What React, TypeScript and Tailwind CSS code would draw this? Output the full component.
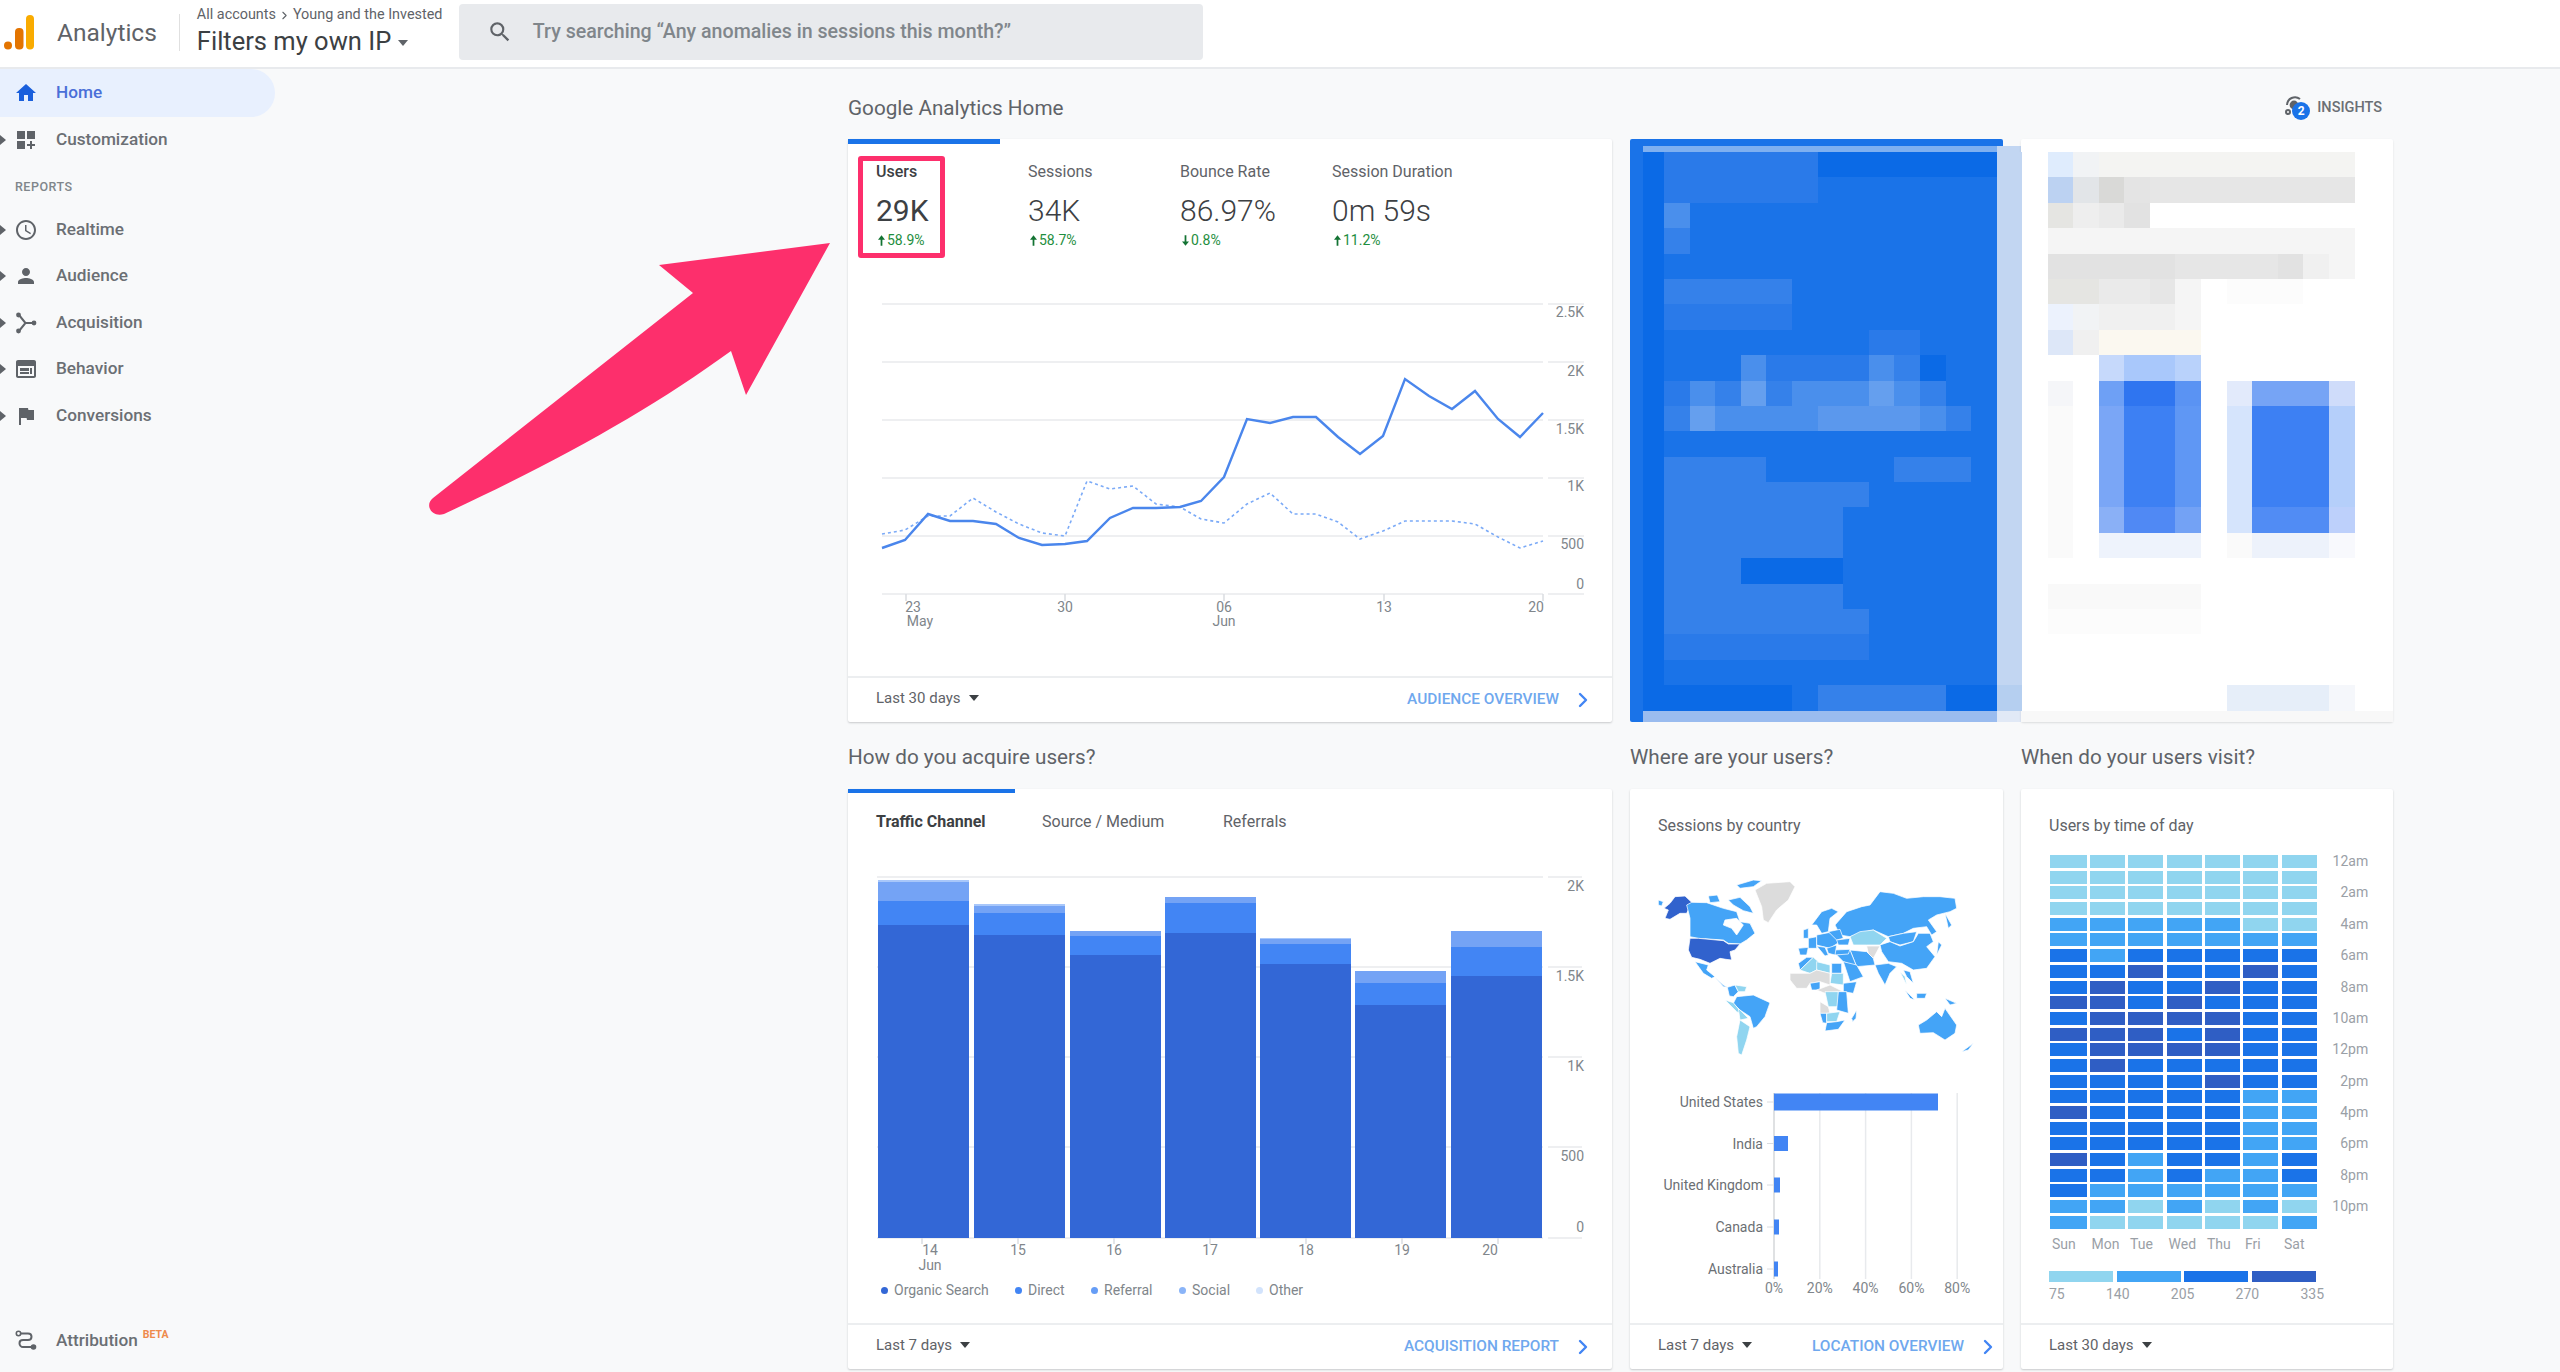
import { ChevronRight } from "lucide-react";

const iconPaths: Record<string, string> = {
  home: "M10 20v-6h4v6h5v-8h3L12 3 2 12h3v8z",
  customization: "M3 3h8v8H3zm10 0h8v8h-8zM3 13h8v8H3zm15 0h-2v3h-3v2h3v3h2v-3h3v-2h-3z",
  realtime:
    "M11.99 2C6.47 2 2 6.48 2 12s4.47 10 9.99 10C17.52 22 22 17.52 22 12S17.52 2 11.99 2zM12 20c-4.42 0-8-3.58-8-8s3.58-8 8-8 8 3.58 8 8-3.58 8-8 8zm.5-13H11v6l5.25 3.15.75-1.23-4.5-2.67z",
  audience:
    "M12 12c2.21 0 4-1.79 4-4s-1.79-4-4-4-4 1.79-4 4 1.79 4 4 4zm0 2c-2.67 0-8 1.34-8 4v2h16v-2c0-2.66-5.33-4-8-4z",
  behavior:
    "M20 3H4c-1.1 0-2 .9-2 2v14c0 1.1.9 2 2 2h16c1.1 0 2-.9 2-2V5c0-1.1-.9-2-2-2zm0 16H4V9h16v10zM6 11h9v3H6zm0 4h9v2H6zm10-4h2v6h-2z",
  conversions: "M14.4 6L14 4H5v17h2v-7h5.6l.4 2h7V6z",
};

function NavIcon({ name, active }: { name: string; active?: boolean }) {
  if (name === "acquisition") {
    return (
      <svg viewBox="0 0 24 24" className="h-6 w-6 text-[#5f6368]">
        <path d="M5 4l6.5 8L5 20M11.5 12H20" fill="none" stroke="currentColor" strokeWidth="2" />
        <circle cx="4.5" cy="4" r="2.4" fill="currentColor" />
        <circle cx="4.5" cy="20" r="2.4" fill="currentColor" />
        <circle cx="20" cy="12" r="2.4" fill="currentColor" />
      </svg>
    );
  }
  if (name === "attribution") {
    return (
      <svg viewBox="0 0 24 24" className="h-6 w-6 text-[#5f6368]">
        <path
          d="M5 4.5h9c2.5 0 3.5 1.5 3.5 3.3S16 11 14 11h-5c-2 0-3.5 1.3-3.5 3.2S7 18 9 18h10"
          fill="none"
          stroke="currentColor"
          strokeWidth="2"
        />
        <circle cx="4.5" cy="4.5" r="2.2" fill="#f8f9fa" stroke="currentColor" strokeWidth="1.6" />
        <circle cx="19.5" cy="18" r="2.8" fill="currentColor" />
      </svg>
    );
  }
  return (
    <svg
      viewBox="0 0 24 24"
      className={active ? "h-6 w-6 text-[#1a5fdc]" : "h-6 w-6 text-[#5f6368]"}
      fill="currentColor"
    >
      <path d={iconPaths[name]} />
    </svg>
  );
}

function Caret({ className }: { className: string }) {
  return (
    <svg viewBox="0 0 10 6" className={className} fill="currentColor">
      <path d="M0 0h10L5 6z" />
    </svg>
  );
}

function NavRow({ icon, label, expand = true }: { icon: string; label: string; expand?: boolean }) {
  return (
    <div className="relative flex h-[46.5px] items-center pl-[14px] text-[17.2px] font-medium text-[#6b6f74]">
      {expand && (
        <svg viewBox="0 0 6 10" className="absolute left-0 top-[18px] h-[10px] w-[6px] text-[#5f6368]" fill="currentColor">
          <path d="M0 0l6 5-6 5z" />
        </svg>
      )}
      <NavIcon name={icon} />
      <span className="ml-[18px]">{label}</span>
    </div>
  );
}

function Sidebar() {
  return (
    <aside className="flex h-[1303px] w-[276px] shrink-0 flex-col">
      <div className="flex h-[48px] w-[275px] items-center rounded-r-[24px] bg-[#e8f0fe] pl-[14px] text-[17.2px] font-medium text-[#4a6fd8]">
        <NavIcon name="home" active />
        <span className="ml-[18px]">Home</span>
      </div>
      <NavRow icon="customization" label="Customization" />
      <div className="flex h-[43px] items-center pl-[15px] pt-[5px] text-[12.5px] font-medium tracking-[0.5px] text-[#80868b]">
        REPORTS
      </div>
      <NavRow icon="realtime" label="Realtime" />
      <NavRow icon="audience" label="Audience" />
      <NavRow icon="acquisition" label="Acquisition" />
      <NavRow icon="behavior" label="Behavior" />
      <NavRow icon="conversions" label="Conversions" />
      <div className="mt-auto mb-[8px] flex h-[46.5px] items-center pl-[14px] text-[17.2px] font-medium text-[#6b6f74]">
        <NavIcon name="attribution" />
        <span className="ml-[18px]">Attribution</span>
        <span className="mb-[12px] ml-[5px] text-[10.5px] font-bold text-[#ee8a4c]">BETA</span>
      </div>
    </aside>
  );
}

function Header() {
  return (
    <header className="flex h-[69px] items-start border-b-2 border-[#e8eaed] bg-white">
      <svg viewBox="0 0 36 36" className="ml-[3px] mt-[14px] h-[36px] w-[36px]">
        <rect x="23" y="1" width="8" height="34.5" rx="4" fill="#f9ab00" />
        <rect x="12" y="14" width="8.5" height="21.5" rx="4" fill="#e37400" />
        <circle cx="5" cy="31.5" r="4" fill="#e37400" />
      </svg>
      <span className="ml-[18px] mt-[18px] text-[24.5px] leading-[30px] text-[#5f6368]">Analytics</span>
      <div className="ml-[22px] mt-[14px] h-[37px] w-px bg-[#e0e0e0]" />
      <div className="ml-[17px] mt-[6px] flex w-[262px] flex-col">
        <div className="flex items-center whitespace-nowrap text-[14.4px] leading-[18px] text-[#5f6368]">
          All accounts
          <ChevronRight className="mx-[2px] h-[13px] w-[13px]" />
          Young and the Invested
        </div>
        <div className="mt-[2px] flex items-center text-[25.5px] leading-[30px] text-[#3c4043]">
          Filters my own IP
          <Caret className="ml-[7px] mt-[4px] h-[6px] w-[10px] text-[#5f6368]" />
        </div>
      </div>
      <div className="mt-[4px] flex h-[56px] w-[744px] items-center rounded-[4px] bg-[#e8eaed] pl-[28px]">
        <svg viewBox="0 0 24 24" className="h-[26px] w-[26px] text-[#5f6368]" fill="currentColor">
          <path d="M15.5 14h-.79l-.28-.27A6.47 6.47 0 0 0 16 9.5 6.5 6.5 0 1 0 9.5 16c1.61 0 3.09-.59 4.23-1.57l.27.28v.79l5 4.99L20.49 19l-4.99-5zm-6 0C7.01 14 5 11.99 5 9.5S7.01 5 9.5 5 14 7.01 14 9.5 11.99 14 9.5 14z" />
        </svg>
        <span className="ml-[20px] text-[19.6px] font-medium text-[#80868b]">
          Try searching “Any anomalies in sessions this month?”
        </span>
      </div>
    </header>
  );
}

function CardFooter({
  range,
  link,
  linkRight = 0,
}: {
  range: string;
  link?: string;
  linkRight?: number;
}) {
  return (
    <div className="mt-auto flex h-[46px] items-center border-t-2 border-[#eceef0] pb-[4px] pl-[28px]">
      <span className="text-[15px] text-[#5f6368]">{range}</span>
      <Caret className="ml-[8px] h-[6px] w-[10px] text-[#3c4043]" />
      {link && (
        <div className="ml-auto mt-[3px] flex items-center" style={{ paddingRight: linkRight }}>
          <span className="text-[15.4px] font-medium text-[#6fa8ee]">{link}</span>
          <ChevronRight className="ml-[12px] h-[24px] w-[24px] text-[#4285f4]" strokeWidth={2.4} />
        </div>
      )}
    </div>
  );
}

const metrics = [
  { label: "Users", value: "29K", delta: "58.9%", up: true },
  { label: "Sessions", value: "34K", delta: "58.7%", up: true },
  { label: "Bounce Rate", value: "86.97%", delta: "0.8%", up: false },
  { label: "Session Duration", value: "0m 59s", delta: "11.2%", up: true },
];

// measured off the reference, as [x, y] in chart coordinates
const usersLine = [
  [34, 259], [57, 251], [80, 225], [102, 232], [125, 232], [148, 235], [171, 249], [194, 256],
  [217, 255], [239, 252], [262, 229], [285, 219], [308, 219], [332, 218], [353, 212], [376, 188],
  [399, 130], [422, 134], [445, 128], [468, 128], [490, 148], [512, 165], [535, 147], [557, 90],
  [581, 107], [604, 120], [627, 102], [650, 130], [672, 148], [695, 124],
];
const previousLine = [
  [34, 245], [57, 241], [80, 227], [102, 227], [125, 209], [148, 223], [171, 235], [194, 244],
  [217, 247], [239, 192], [262, 200], [285, 197], [308, 215], [332, 218], [353, 230], [376, 234],
  [399, 215], [422, 204], [445, 225], [468, 225], [490, 233], [512, 250], [535, 242], [557, 232],
  [581, 232], [604, 232], [627, 235], [650, 248], [672, 259], [695, 252],
];
const toPoints = (line: number[][]) => line.map((p) => p.join(",")).join(" ");

function AudienceChart() {
  const grid = [15, 73, 131, 189, 247, 305];
  const yLabels = [
    ["2.5K", 23],
    ["2K", 82],
    ["1.5K", 140],
    ["1K", 197],
    ["500", 255],
    ["0", 295],
  ] as const;
  const xLabels = [
    { tick: 58, x: 65, day: "23", month: "May", mx: 72 },
    { tick: 217, x: 217, day: "30" },
    { tick: 376, x: 376, day: "06", month: "Jun", mx: 376 },
    { tick: 536, x: 536, day: "13" },
    { tick: 695, x: 688, day: "20" },
  ];
  return (
    <svg viewBox="0 0 764 345" className="mt-[5px] h-[345px] w-[764px]">
      {grid.map((y) => (
        <g key={y} stroke="#e8eaed" strokeWidth="1.5">
          <line x1="34" x2="695" y1={y} y2={y} />
          <line x1="700" x2="736" y1={y} y2={y} />
        </g>
      ))}
      {yLabels.map(([label, y]) => (
        <text key={label} x="736" y={y} textAnchor="end" dominantBaseline="central" className="fill-[#80868b] text-[14px]">
          {label}
        </text>
      ))}
      {xLabels.map((l) => (
        <g key={l.day}>
          <line x1={l.tick} x2={l.tick} y1="305" y2="312" stroke="#dadce0" strokeWidth="1.5" />
          <text x={l.x} y="318" textAnchor="middle" dominantBaseline="central" className="fill-[#80868b] text-[14px]">
            {l.day}
          </text>
          {l.month && (
            <text x={l.mx} y="332" textAnchor="middle" dominantBaseline="central" className="fill-[#80868b] text-[14px]">
              {l.month}
            </text>
          )}
        </g>
      ))}
      <polyline points={toPoints(previousLine)} fill="none" stroke="#7baaf7" strokeWidth="1.6" strokeDasharray="3 3" />
      <polyline points={toPoints(usersLine)} fill="none" stroke="#4a86ec" strokeWidth="2.4" />
    </svg>
  );
}

function AudienceCard() {
  return (
    <section className="relative flex h-[583px] w-[764px] flex-col rounded-[2px] bg-white shadow-[0_1px_2px_rgba(60,64,67,0.25)]">
      <div className="h-[5px] w-[152px] bg-[#1a73e8]" />
      <div className="flex h-[140px] pl-[28px] pt-[19px]">
        {metrics.map((m, i) => (
          <div key={m.label} className="w-[152px]">
            <div className={i === 0 ? "text-[16px] font-medium leading-[18px] text-[#3c4043]" : "text-[16px] leading-[18px] text-[#5f6368]"}>
              {m.label}
            </div>
            <div className={i === 0 ? "mt-[11px] text-[30px] leading-[38px] text-[#3c4043]" : "mt-[11px] text-[30px] font-light leading-[38px] text-[#3c4043]"}>
              {m.value}
            </div>
            <div className="mt-[1px] flex items-center text-[14px] leading-[18px] text-[#1e8e3e]">
              <svg viewBox="0 0 8 12" className="mr-[2px] ml-[2px] h-[11px] w-[7px]" fill="#137333">
                <path d={m.up ? "M4 0l4 5H5v7H3V5H0z" : "M4 12L0 7h3V0h2v7h3z"} />
              </svg>
              {m.delta}
            </div>
          </div>
        ))}
      </div>
      <AudienceChart />
      <CardFooter range="Last 30 days" link="AUDIENCE OVERVIEW" linkRight={17} />
      <div className="absolute left-[10px] top-[17px] h-[102px] w-[87px] rounded-[3px] border-[5px] border-[#fd2f6c]" />
    </section>
  );
}

const blueCells: Record<string, string> = {
  a: "bg-[#1a73e8]",
  b: "bg-[#0b6ae6]",
  c: "bg-[#2a7ae9]",
  d: "bg-[#3581ea]",
  e: "bg-[#4a8fec]",
  f: "bg-[#659fee]",
  g: "bg-[#5b98ed]",
  L: "bg-[#c2d6f2]",
  M: "bg-[#b5cff0]",
};

const blueRows = [
  "bccccccbbbbbbbL",
  "bccccccaaaaaaaL",
  "beaaaaaaaaaaaaL",
  "bdaaaaaaaaaaaaL",
  "baaaaaaaaaaaaaL",
  "bdddddaaaaaaaaL",
  "bcccccaaaaaaaaL",
  "baaaaaaaaccaaaL",
  "baaaeccccedbaaL",
  "bcedfdeeefedaaL",
  "bdfeeeeggggedaL",
  "baaaaaaaaaaaaaL",
  "bddddaaaaadddaL",
  "bddddddddaaaaaL",
  "bdddddddaaaaaaL",
  "bdddddddaaaaaaL",
  "bdddbbbbaaaaaaL",
  "bdddddddaaaaaaL",
  "bddddddddaaaaaL",
  "bccccccccaaaaaL",
  "baaaaaaaaaaaaaL",
  "bbbbbbadddddbbM",
];

const paleCells: Record<string, string> = {
  A: "bg-[#dfecfd]", B: "bg-[#f1f3f5]", C: "bg-[#f4f4f2]", D: "bg-[#bcd2f2]", E: "bg-[#e2e5e8]",
  F: "bg-[#d9d9d7]", G: "bg-[#e4e4e4]", H: "bg-[#e6e6e6]", I: "bg-[#e5e5e2]", J: "bg-[#eeeeee]",
  K: "bg-[#eaeaea]", l: "bg-[#e2e2e2]", m: "bg-[#f5f5f5]", n: "bg-[#f0f0f0]", o: "bg-[#fcfcfc]",
  p: "bg-[#ecf2fd]", q: "bg-[#dde7f8]", r: "bg-[#fbf8f0]", s: "bg-white", t: "bg-[#c6d9fb]",
  u: "bg-[#a9c8fb]", v: "bg-[#b9d2fb]", w: "bg-[#f5f6f9]", x: "bg-[#6ea0f5]", y: "bg-[#2f75f0]",
  z: "bg-[#5a93f3]", "1": "bg-[#e2eafb]", "2": "bg-[#76a4f5]", "3": "bg-[#cfdcfa]", "4": "bg-[#fafafa]",
  "5": "bg-[#7aa6f6]", "6": "bg-[#3d80f3]", "7": "bg-[#5f97f4]", "8": "bg-[#d5e4fc]", "9": "bg-[#b5cffa]",
  "0": "bg-[#8ab0f6]", "!": "bg-[#5089f4]", "@": "bg-[#73a2f5]", "#": "bg-[#518cf4]", $: "bg-[#bdd0fb]",
  "%": "bg-[#eef3fc]", "^": "bg-[#edf2fb]", "&": "bg-[#f8f9fd]", "*": "bg-[#e6eef9]", "+": "bg-[#f5f7fb]",
  "=": "bg-[#f9f9f9]",
};

const paleRows = [
  "ABCCCCCCCCCC",
  "DEFGHHHHHHHH",
  "IJKlssssssss",
  "mmmmmmmmmmmm",
  "lllllHHHHlnm",
  "IIKKHmsoooss",
  "pBnnnmssssss",
  "qnrrrrssssss",
  "sstuuvssssss",
  "wsxyyzs12223",
  "4s5667s86669",
  "4s5667s86669",
  "4s5667s86669",
  "4s5667s86669",
  "4s0!!@s8###$",
  "4s%%%%s4^^^&",
  "ssssssssssss",
  "======ssssss",
  "oooooossssss",
  "ssssssssssss",
  "ssssssssssss",
  "sssssss****+",
];

function BlurredBlueCard() {
  return (
    <section className="h-[583px] w-[373px] rounded-[2px] bg-[#1a73e8] pl-[13px] pt-[7px]">
      <div className="flex h-[6px] w-[379px]">
        <div className="w-[353.5px] bg-[#7fb0f0]" />
        <div className="flex-1 bg-[#c2d6f2]" />
      </div>
      <div className="grid w-[379px] auto-rows-[25.4px] grid-cols-[21px_repeat(13,25.6px)_25px] blur-[0.6px]">
        {blueRows.map((row, r) =>
          row.split("").map((c, i) => <div key={`${r}-${i}`} className={blueCells[c]} />),
        )}
      </div>
      <div className="flex h-[11px] w-[379px]">
        <div className="w-[353.5px] bg-[#9abcef]" />
        <div className="flex-1 bg-[#e1e9f6]" />
      </div>
    </section>
  );
}

function BlurredWhiteCard() {
  return (
    <section className="h-[583px] w-[372px] rounded-[2px] bg-white pt-[13px] shadow-[0_1px_2px_rgba(60,64,67,0.15)]">
      <div className="ml-[26.5px] grid w-[308px] auto-rows-[25.4px] grid-cols-[repeat(12,25.6px)] blur-[0.6px]">
        {paleRows.map((row, r) =>
          row.split("").map((c, i) => <div key={`${r}-${i}`} className={paleCells[c]} />),
        )}
      </div>
      <div className="h-[11px] bg-[#f8f8f8]" />
    </section>
  );
}

// y of the top of each stacked segment, in chart coordinates
const trafficBars = [
  { x: 30, day: "14", labelX: 82, other: 21, social: 23, referral: 42, organic: 66 },
  { x: 126, day: "15", labelX: 170, other: 45, social: 47, referral: 54, organic: 76 },
  { x: 222, day: "16", labelX: 266, other: 72, social: 72, referral: 77, organic: 96 },
  { x: 317, day: "17", labelX: 362, other: 38, social: 38, referral: 44, organic: 74 },
  { x: 412, day: "18", labelX: 458, other: 79, social: 80, referral: 85, organic: 105 },
  { x: 507, day: "19", labelX: 554, other: 112, social: 112, referral: 124, organic: 146 },
  { x: 603, day: "20", labelX: 642, other: 72, social: 72, referral: 88, organic: 117 },
];

function TrafficChart() {
  const base = 379; // y of the 0 line
  const yLabels = [
    ["2K", 27],
    ["1.5K", 117],
    ["1K", 207],
    ["500", 297],
    ["0", 368],
  ] as const;
  const ticks = [74, 170, 266, 362, 458, 554, 650];
  return (
    <svg viewBox="0 0 764 416" className="h-[416px] w-[764px]">
      {[18, 108, 198, 288, base].map((y) => (
        <g key={y} stroke="#e8eaed" strokeWidth="1.5">
          <line x1="29" x2="695" y1={y} y2={y} />
          <line x1="700" x2="734" y1={y} y2={y} />
        </g>
      ))}
      {yLabels.map(([label, y]) => (
        <text key={label} x="736" y={y} textAnchor="end" dominantBaseline="central" className="fill-[#80868b] text-[14px]">
          {label}
        </text>
      ))}
      {trafficBars.map((b, i) => (
        <g key={b.day}>
          <rect x={b.x} y={b.other} width="91" height={base - b.other} fill="#a8c7fa" />
          <rect x={b.x} y={b.social} width="91" height={base - b.social} fill="#74a3f5" />
          <rect x={b.x} y={b.referral} width="91" height={base - b.referral} fill="#4285f4" />
          <rect x={b.x} y={b.organic} width="91" height={base - b.organic} fill="#3367d6" />
          <line x1={ticks[i]} x2={ticks[i]} y1={base} y2={base + 6} stroke="#dadce0" strokeWidth="1.5" />
          <text x={b.labelX} y={base + 12} textAnchor="middle" dominantBaseline="central" className="fill-[#80868b] text-[14px]">
            {b.day}
          </text>
        </g>
      ))}
      <text x="82" y={base + 27} textAnchor="middle" dominantBaseline="central" className="fill-[#80868b] text-[14px]">
        Jun
      </text>
    </svg>
  );
}

const legend = [
  { label: "Organic Search", dot: "bg-[#3367d6]", width: "w-[134px]" },
  { label: "Direct", dot: "bg-[#4285f4]", width: "w-[76px]" },
  { label: "Referral", dot: "bg-[#669df6]", width: "w-[88px]" },
  { label: "Social", dot: "bg-[#8ab4f8]", width: "w-[77px]" },
  { label: "Other", dot: "bg-[#d2e3fc]", width: "w-[60px]" },
];

function AcquisitionCard() {
  return (
    <section className="flex h-[580px] w-[764px] flex-col rounded-[2px] bg-white shadow-[0_1px_2px_rgba(60,64,67,0.25)]">
      <div className="h-[4px] w-[167px] bg-[#1a73e8]" />
      <div className="flex h-[66px] items-start pl-[28px] pt-[20px] text-[16px] leading-[18px] text-[#5f6368]">
        <span className="w-[166px] font-bold text-[#3c4043]">Traffic Channel</span>
        <span className="w-[181px]">Source / Medium</span>
        <span>Referrals</span>
      </div>
      <TrafficChart />
      <div className="mt-[5px] flex h-[20px] items-center pl-[33px] text-[14px] text-[#80868b]">
        {legend.map((l) => (
          <div key={l.label} className={`flex items-center ${l.width}`}>
            <span className={`mr-[6px] h-[7px] w-[7px] rounded-full ${l.dot}`} />
            {l.label}
          </div>
        ))}
      </div>
      <CardFooter range="Last 7 days" link="ACQUISITION REPORT" linkRight={17} />
    </section>
  );
}

const land = {
  dark: "#3162cd",
  mid: "#44a4f7",
  light: "#90d5f0",
  gray: "#dcdcdc",
};

const mapShapes: [string, string][] = [
  [land.dark, "105,80 135,78 155,97 140,130 120,130 90,148 75,145 85,120 72,115 90,100"],
  [land.mid, "55,90 70,95 65,108 55,105"],
  [land.mid, "140,105 155,97 200,98 250,115 290,125 300,155 330,160 345,190 320,210 300,222 265,220 250,210 175,205 150,200 150,145"],
  ["#ffffff", "255,150 290,145 310,165 290,195 275,175 250,165"],
  [land.mid, "205,78 232,75 240,95 210,98"],
  [land.mid, "290,45 340,30 365,32 340,50 300,55"],
  [land.mid, "265,90 300,82 330,110 340,130 310,122 280,105"],
  [land.gray, "345,60 380,40 450,35 465,50 445,90 410,120 385,158 370,150 365,110"],
  [land.dark, "150,205 175,205 250,212 265,222 300,222 285,240 270,245 275,270 258,268 240,265 210,280 180,268 155,262 145,240"],
  [land.mid, "165,275 205,285 200,300 225,320 215,325 190,310"],
  [land.mid, "225,322 250,345 262,352 250,350"],
  [land.mid, "262,352 285,345 295,365 280,380 268,378"],
  [land.light, "285,345 320,350 315,365 295,365"],
  [land.mid, "290,380 340,375 390,398 375,440 350,470 340,475 330,440 300,420 280,400"],
  [land.light, "255,390 280,398 310,435 290,425"],
  [land.light, "295,415 325,445 300,450"],
  [land.light, "300,450 330,470 320,510 305,555 295,550 290,500"],
  [land.mid, "585,165 620,125 665,110 690,105 720,65 760,70 800,85 850,80 900,80 945,85 950,115 930,125 890,135 865,150 890,185 875,195 860,170 820,175 790,190 745,200 700,180 660,190 630,200 600,195"],
  [land.light, "630,200 660,185 700,180 740,205 720,225 680,225 640,225"],
  [land.mid, "745,200 790,190 830,185 820,215 780,225 750,215"],
  [land.mid, "720,225 750,215 780,228 820,215 835,190 870,190 880,215 860,230 885,260 860,295 820,300 785,280 745,275 725,245"],
  [land.mid, "705,285 745,280 770,290 750,310 735,345 715,310"],
  [land.mid, "630,240 680,245 700,265 705,285 650,290"],
  [land.mid, "590,255 630,240 650,290 610,275"],
  [land.gray, "680,228 720,228 700,265 685,250"],
  [land.mid, "610,275 650,285 670,320 630,335"],
  [land.mid, "580,240 630,238 625,252 585,255"],
  [land.mid, "515,165 545,125 575,115 595,125 570,145 565,185 545,190 530,165"],
  [land.mid, "490,180 505,175 505,205 490,205"],
  [land.mid, "475,235 505,232 500,255 480,255"],
  [land.mid, "505,205 530,200 530,235 505,235"],
  [land.mid, "530,195 565,188 585,190 600,215 570,235 530,225"],
  [land.mid, "565,185 600,178 610,205 590,210"],
  [land.mid, "590,210 630,205 625,225 595,225"],
  [land.mid, "530,228 555,232 565,255 555,258"],
  [land.mid, "560,235 590,225 585,255 565,250"],
  [land.mid, "475,280 500,262 520,262 480,300"],
  [land.light, "480,300 520,262 535,275 530,300 510,310"],
  [land.light, "530,275 570,285 570,310 530,300"],
  [land.mid, "575,280 605,280 605,310 575,310"],
  [land.light, "575,310 610,310 610,345 570,340"],
  [land.gray, "450,310 510,310 530,300 570,310 570,345 540,335 510,340 500,355 470,355 450,330"],
  [land.mid, "510,340 540,335 540,360 515,360"],
  [land.mid, "610,340 650,335 640,370 610,365"],
  [land.gray, "530,360 570,345 610,365 595,365 555,370"],
  [land.light, "555,365 595,365 595,410 565,410"],
  [land.gray, "540,395 565,410 570,430 540,430"],
  [land.mid, "595,365 620,365 625,430 590,420"],
  [land.mid, "540,430 560,430 560,460 548,458"],
  [land.light, "560,430 600,425 590,455 560,455"],
  [land.mid, "555,483 560,458 590,455 615,450 595,478"],
  [land.mid, "635,445 650,420 648,445 638,455"],
  [land.mid, "790,300 810,305 820,340 800,320"],
  [land.light, "780,305 795,320 800,345"],
  [land.mid, "795,360 825,390 810,385"],
  [land.mid, "830,370 860,370 855,385 830,385"],
  [land.mid, "915,385 950,400 930,405"],
  [land.mid, "915,130 935,165 925,175"],
  [land.mid, "895,215 905,225 890,255"],
  [land.mid, "835,465 860,450 890,425 905,440 915,415 950,465 945,490 915,510 880,488 840,490"],
  [land.mid, "965,545 1000,520 985,540"],
];

function CountryBars() {
  const rows = [
    { name: "United States", y: 19, h: 17, w: 164 },
    { name: "India", y: 60.5, h: 15, w: 14 },
    { name: "United Kingdom", y: 102, h: 15, w: 6 },
    { name: "Canada", y: 144, h: 15, w: 5 },
    { name: "Australia", y: 186, h: 15, w: 4 },
  ];
  const ticks = ["0%", "20%", "40%", "60%", "80%"];
  return (
    <svg viewBox="0 0 372 222" className="h-[222px] w-[372px]">
      {ticks.map((t, i) => (
        <g key={t}>
          <line x1={144 + i * 45.8} x2={144 + i * 45.8} y1="10" y2="196" stroke={i === 0 ? "#d5d7da" : "#e8eaed"} strokeWidth="1.5" />
          <text x={144 + i * 45.8} y="205" textAnchor="middle" dominantBaseline="central" className="fill-[#80868b] text-[14px]">
            {t}
          </text>
        </g>
      ))}
      {rows.map((r) => (
        <g key={r.name}>
          <line x1="137" x2="144" y1={r.y} y2={r.y} stroke="#dadce0" strokeWidth="1" />
          <text x="133" y={r.y} textAnchor="end" dominantBaseline="central" className="fill-[#6b6f74] text-[14px]">
            {r.name}
          </text>
          <rect x="144" y={r.y - r.h / 2} width={r.w} height={r.h} fill="#4285f4" />
        </g>
      ))}
    </svg>
  );
}

function LocationCard() {
  return (
    <section className="flex h-[580px] w-[373px] flex-col rounded-[2px] bg-white shadow-[0_1px_2px_rgba(60,64,67,0.25)]">
      <div className="pl-[28px] pt-[28px] text-[16px] leading-[18px] text-[#5f6368]">Sessions by country</div>
      <svg viewBox="0 0 1080 630" className="ml-[10px] mt-[35px] h-[210px] w-[360px]">
        {mapShapes.map(([fill, points], i) => (
          <polygon key={i} points={points} fill={fill} stroke="#ffffff" strokeWidth="2.2" strokeLinejoin="round" />
        ))}
      </svg>
      <div className="mt-[3px]">
        <CountryBars />
      </div>
      <CardFooter range="Last 7 days" link="LOCATION OVERVIEW" linkRight={3} />
    </section>
  );
}

const heatColors = ["bg-[#90d5ef]", "bg-[#42a5f5]", "bg-[#1a73e8]", "bg-[#2f5ec4]"];

const heatRows = [
  "0000000", "0000000", "0000000", "0000000", "1111100", "1111111", "2122222", "2232232",
  "2322322", "3323222", "2333322", "3332322", "2333322", "2322222", "2222322", "2222211",
  "3222211", "2222211", "2222211", "3212212", "2212112", "2111111", "1101010", "1000001",
];

const hourLabels: Record<number, string> = {
  0: "12am", 2: "2am", 4: "4am", 6: "6am", 8: "8am", 10: "10am", 12: "12pm",
  14: "2pm", 16: "4pm", 18: "6pm", 20: "8pm", 22: "10pm",
};

const days = [
  { name: "Sun", cls: "w-[39.5px]" },
  { name: "Mon", cls: "w-[38.5px]" },
  { name: "Tue", cls: "w-[38.5px]" },
  { name: "Wed", cls: "w-[38.5px]" },
  { name: "Thu", cls: "w-[38px]" },
  { name: "Fri", cls: "w-[39px]" },
  { name: "Sat", cls: "w-[38px]" },
];

function TimeCard() {
  return (
    <section className="flex h-[580px] w-[372px] flex-col rounded-[2px] bg-white shadow-[0_1px_2px_rgba(60,64,67,0.25)]">
      <div className="pl-[28px] pt-[28px] text-[16px] leading-[18px] text-[#5f6368]">Users by time of day</div>
      <div className="ml-[28.5px] mt-[20px] grid grid-cols-[37px_repeat(6,35px)_48px] gap-x-[3.4px] gap-y-[2.7px]">
        {heatRows.map((row, r) => (
          <div key={r} className="contents">
            {row.split("").map((level, i) => (
              <div key={i} className={`h-[13px] ${heatColors[Number(level)]}`} />
            ))}
            <div className="text-right text-[14px] leading-[13px] text-[#9aa0a6]">{hourLabels[r]}</div>
          </div>
        ))}
      </div>
      <div className="ml-[31px] mt-[6px] flex text-[14px] leading-[18px] text-[#9aa0a6]">
        {days.map((d) => (
          <span key={d.name} className={d.cls}>
            {d.name}
          </span>
        ))}
      </div>
      <div className="ml-[28px] mt-[18px] flex h-[11px] w-[267px] gap-[3.5px]">
        {heatColors.map((c) => (
          <div key={c} className={`flex-1 ${c}`} />
        ))}
      </div>
      <div className="ml-[28px] mt-[3px] flex w-[275px] justify-between text-[14px] leading-[18px] text-[#9aa0a6]">
        <span>75</span>
        <span>140</span>
        <span>205</span>
        <span>270</span>
        <span>335</span>
      </div>
      <CardFooter range="Last 30 days" />
    </section>
  );
}

function SectionTitle({ children }: { children: React.ReactNode }) {
  return <div className="text-[20.7px] leading-[28px] text-[#5f6368]">{children}</div>;
}

function Arrow() {
  return (
    <svg viewBox="0 0 2560 1372" className="pointer-events-none absolute left-0 top-0 h-[1372px] w-[2560px]">
      <path
        d="M830 243 L659 265 L693 293 L433 498 C424 505 432 518 444 514 C560 460 650 410 731 351 L746 395 Z"
        fill="#fd2f6c"
      />
    </svg>
  );
}

export default function App() {
  return (
    <div className="relative h-[1372px] w-[2560px] overflow-hidden bg-[#f8f9fa] font-['Roboto',sans-serif]">
      <Header />
      <div className="flex">
        <Sidebar />
        <main className="ml-[572px] w-[1545px]">
          <div className="flex h-[70px] items-center justify-between pt-[8px] pr-[11px]">
            <SectionTitle>Google Analytics Home</SectionTitle>
            <div className="flex items-center">
              <div className="relative h-[28px] w-[28px]">
                <svg viewBox="0 0 24 24" className="h-[24px] w-[24px] text-[#5f6368]" fill="none" stroke="currentColor" strokeWidth="2">
                  <path d="M4 11a8 8 0 0 1 13-6" />
                  <circle cx="11" cy="11" r="3.4" fill="currentColor" />
                  <circle cx="5" cy="18" r="2" />
                </svg>
                <span className="absolute left-[9px] top-[8px] flex h-[18px] w-[18px] items-center justify-center rounded-full bg-[#1a73e8] text-[12px] font-bold text-white">
                  2
                </span>
              </div>
              <span className="ml-[6px] text-[14.5px] font-medium text-[#6b6f74]">INSIGHTS</span>
            </div>
          </div>
          <div className="flex gap-[18px]">
            <AudienceCard />
            <BlurredBlueCard />
            <BlurredWhiteCard />
          </div>
          <div className="flex gap-[18px]">
            <div>
              <div className="flex h-[67px] items-center pt-[3px]">
                <SectionTitle>How do you acquire users?</SectionTitle>
              </div>
              <AcquisitionCard />
            </div>
            <div>
              <div className="flex h-[67px] items-center pt-[3px]">
                <SectionTitle>Where are your users?</SectionTitle>
              </div>
              <LocationCard />
            </div>
            <div>
              <div className="flex h-[67px] items-center pt-[3px]">
                <SectionTitle>When do your users visit?</SectionTitle>
              </div>
              <TimeCard />
            </div>
          </div>
        </main>
      </div>
      <Arrow />
    </div>
  );
}
